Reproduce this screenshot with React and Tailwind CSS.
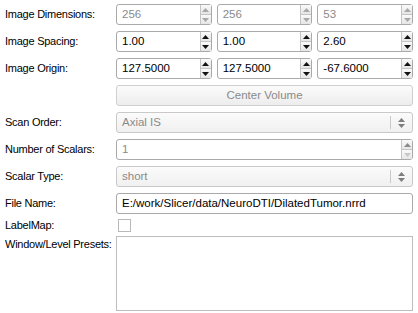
const font = { fontFamily: '"Liberation Sans", Arial, sans-serif' };

function Arrow({ dir, color }) {
  return (
    <svg width="7" height="4" viewBox="0 0 7 4" className="block">
      {dir === "up" ? (
        <path d="M0 4 L3.5 0 L7 4 Z" fill={color} />
      ) : (
        <path d="M0 0 L3.5 4 L7 0 Z" fill={color} />
      )}
    </svg>
  );
}

function Spin({ value, disabled, upColor, downColor }) {
  const up = upColor || (disabled ? "#a8a8a8" : "#111");
  const down = downColor || (disabled ? "#a8a8a8" : "#111");
  return (
    <div className="flex h-[21px] flex-1 rounded-[3px] border border-[#a9a9a9] bg-white">
      <div
        className={`flex flex-1 items-center pl-[5px] text-[11.5px] ${
          disabled ? "text-[#8a8a8a]" : "text-black"
        }`}
      >
        {value}
      </div>
      <div className="flex w-[11px] flex-col border-l border-[#c4c4c4]">
        <div className="flex flex-1 items-center justify-center border-b border-[#c4c4c4] bg-gradient-to-b from-[#fafafa] to-[#e6e6e6]">
          <Arrow dir="up" color={up} />
        </div>
        <div className="flex flex-1 items-center justify-center bg-gradient-to-b from-[#fafafa] to-[#e6e6e6]">
          <Arrow dir="down" color={down} />
        </div>
      </div>
    </div>
  );
}

function Combo({ value }) {
  return (
    <div className="flex h-[21px] flex-1 items-center rounded-[3px] border border-[#c9c9c9] bg-gradient-to-b from-[#fbfbfb] to-[#f0f0f0]">
      <div className="flex-1 pl-[5px] text-[11.5px] text-[#8a8a8a]">{value}</div>
      <div className="h-[13px] w-px bg-[#c8c8c8]" />
      <div className="flex w-[21px] flex-col items-center gap-[2px]">
        <Arrow dir="up" color="#7d7d7d" />
        <Arrow dir="down" color="#7d7d7d" />
      </div>
    </div>
  );
}

function Label({ children, className = "" }) {
  return (
    <div
      className={`w-[111px] shrink-0 whitespace-nowrap text-[11px] leading-[13px] tracking-[-0.25px] text-black ${className}`}
    >
      {children}
    </div>
  );
}

function Row({ label, children, className = "" }) {
  return (
    <div className={`flex items-center ${className}`}>
      <Label>{label}</Label>
      <div className="flex flex-1 gap-[5px]">{children}</div>
    </div>
  );
}

export default function App() {
  return (
    <div className="h-[313px] w-[418px] bg-white pl-[5px] pr-[5px] pt-[4px]" style={font}>
      <div className="flex flex-col gap-[6px]">
        <Row label="Image Dimensions:">
          <Spin value="256" disabled />
          <Spin value="256" disabled />
          <Spin value="53" disabled />
        </Row>
        <Row label="Image Spacing:">
          <Spin value="1.00" />
          <Spin value="1.00" />
          <Spin value="2.60" />
        </Row>
        <Row label="Image Origin:">
          <Spin value="127.5000" />
          <Spin value="127.5000" />
          <Spin value="-67.6000" />
        </Row>
        <Row label="">
          <div className="flex h-[21px] flex-1 items-center justify-center rounded-[3px] border border-[#cfcfcf] bg-gradient-to-b from-[#fbfbfb] to-[#ededed] text-[11.5px] text-[#8a8a8a]">
            Center Volume
          </div>
        </Row>
        <Row label="Scan Order:">
          <Combo value="Axial IS" />
        </Row>
        <Row label="Number of Scalars:">
          <Spin value="1" disabled upColor="#8a8a8a" downColor="#c8c8c8" />
        </Row>
        <Row label="Scalar Type:">
          <Combo value="short" />
        </Row>
        <Row label="File Name:">
          <div className="flex h-[21px] flex-1 items-center rounded-[3px] border border-[#a9a9a9] bg-white pl-[5px] text-[11.5px] text-black">
            E:/work/Slicer/data/NeuroDTI/DilatedTumor.nrrd
          </div>
        </Row>
        <Row label="LabelMap:" className="-mt-[1px] h-[13px]">
          <div className="ml-[2px] h-[13px] w-[13px] border border-[#b9b9b9] bg-white" />
        </Row>
        <div className="-mt-[2px] flex">
          <Label className="pt-[2px]">Window/Level Presets:</Label>
          <div className="h-[75px] flex-1 border border-[#bdbdbd] bg-white" />
        </div>
      </div>
    </div>
  );
}
